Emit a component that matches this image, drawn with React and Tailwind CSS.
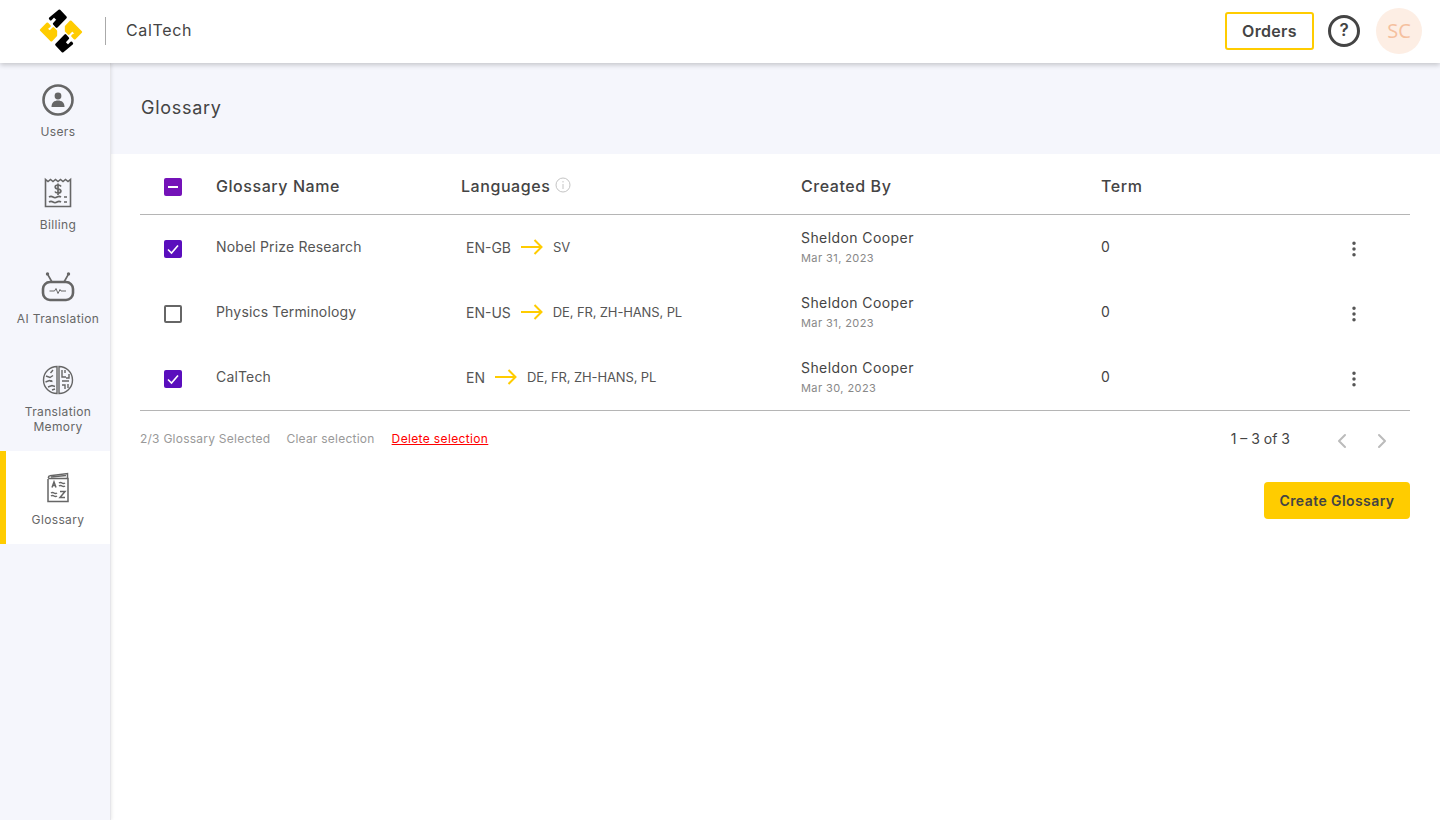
import { EllipsisVertical, ChevronLeft, ChevronRight } from 'lucide-react';

const rows = [
  { name: 'Nobel Prize Research', from: 'EN-GB', to: 'SV', date: 'Mar 31, 2023', checked: true },
  { name: 'Physics Terminology', from: 'EN-US', to: 'DE, FR, ZH-HANS, PL', date: 'Mar 31, 2023', checked: false },
  { name: 'CalTech', from: 'EN', to: 'DE, FR, ZH-HANS, PL', date: 'Mar 30, 2023', checked: true },
];

function Logo() {
  return (
    <svg width="50" height="50" viewBox="0 0 150 150" className="shrink-0" strokeWidth="7" strokeLinejoin="round">
      <path d="M70 14 89 34 62 62 54 53 65 41 54 30 44 40 42 37Z" fill="#000" stroke="#000" />
      <path d="M80 136 61 116 88 88 96 97 85 109 96 120 106 110 108 113Z" fill="#000" stroke="#000" />
      <path d="M15 72 34 53 41 60 31 68 41 78 52 67 60 75 60 88 46 103Z" fill="#ffcc00" stroke="#ffcc00" />
      <path d="M135 78 116 97 109 90 119 82 109 72 98 83 90 75 90 62 104 47Z" fill="#ffcc00" stroke="#ffcc00" />
    </svg>
  );
}

function UsersIcon() {
  return (
    <svg width="34" height="34" viewBox="0 0 34 34" fill="none">
      <circle cx="17" cy="17" r="14.5" stroke="#666" strokeWidth="2.6" />
      <circle cx="17" cy="13" r="3.4" fill="#666" />
      <path d="M10.5 24c0-4.5 2.8-6.5 6.5-6.5s6.5 2 6.5 6.5Z" fill="#666" />
    </svg>
  );
}

function BillingIcon() {
  return (
    <svg width="30" height="32" viewBox="0 0 30 32" fill="none" stroke="#666" strokeWidth="1.6">
      <path d="M2.500 2.500v27h25v-27l-2.500 2-2.500-2-2.500 2-2.500-2-2.500 2-2.500-2-2.500 2-2.500-2-2.500 2Z" />
      <path d="M6 20c1.500-1 2.500-1 4 0s2.500 1 4 0 2.500-1 4 0M6 25c1.500-1 2.500-1 4 0s2.500 1 4 0 2.500-1 4 0M21 20h3M21 25h3" />
      <path d="M18 9.500c-.5-1-1.500-1.500-3-1.500-1.700 0-2.800.8-2.800 2s1 1.800 2.800 2 2.900.8 2.900 2-1.200 2-2.900 2c-1.500 0-2.600-.5-3-1.500M15 6.500v11.500" strokeWidth="1.700" />
    </svg>
  );
}

function RobotIcon() {
  return (
    <svg width="34" height="32" viewBox="0 0 34 32" fill="none" stroke="#666">
      <rect x="2" y="11" width="30" height="18" rx="7" strokeWidth="2.600" />
      <path d="M11 11 7 4M23 11l4-7" strokeWidth="1.600" />
      <circle cx="6.500" cy="3" r="1.700" fill="#666" stroke="none" />
      <circle cx="27.500" cy="3" r="1.700" fill="#666" stroke="none" />
      <path d="M8.500 20h5l1.500-2.500 2 5 2-4 1 1.500h5" strokeWidth="1" />
    </svg>
  );
}

function BrainIcon() {
  return (
    <svg width="32" height="32" viewBox="0 0 32 32" fill="none" stroke="#666" strokeWidth="1.400">
      <path d="M15 2.500C8 2.500 1.500 8 1.500 16S8 29.500 15 29.500Z" />
      <path d="M17 2.500C24 2.500 30.500 8 30.500 16S24 29.500 17 29.500Z" />
      <path d="M11 6 8.500 9M4 12l4 1.500 3-2M3.500 18l4-1.500 3 1M6 23l4-1.500 3 1M10 26l3-1" />
      <path d="M20 6v7h4M27 10v4h-3M20 17h7M20 21h3v4M26 20v4M23 9V6" />
      <circle cx="9" cy="17" r="1" fill="#666" stroke="none" />
    </svg>
  );
}

function BookIcon() {
  return (
    <svg width="26" height="32" viewBox="0 0 26 32" fill="none" stroke="#666" strokeWidth="1.500">
      <path d="M3 7v22.500h20V6.500H4.500C3 6.500 3 4 5 3.800L22.500 1.500v5" />
      <path d="M6 5 21 3.500" />
      <path d="M7 15.500 9 10l2 5.500M7.800 13.500h2.400" />
      <path d="M14 11c1-.8 2-.8 3 0s2 .8 3 0M14 14c1-.8 2-.8 3 0s2 .8 3 0" />
      <path d="M6 21c1-.8 2-.8 3 0s2 .8 3 0M6 24c1-.8 2-.8 3 0s2 .8 3 0" />
      <path d="M15 19.500h5l-5 6h5" />
    </svg>
  );
}

const navItems = [
  { label: ['Users'], icon: UsersIcon, h: 'h-[93px] pt-[20px]' },
  { label: ['Billing'], icon: BillingIcon, h: 'h-[93px] pt-[20px]' },
  { label: ['AI Translation'], icon: RobotIcon, h: 'h-[93px] pt-[21px]' },
  { label: ['Translation', 'Memory'], icon: BrainIcon, h: 'h-[109px] pt-[21px]' },
  { label: ['Glossary'], icon: BookIcon, h: 'h-[93px] pt-[20px]', active: true },
];

function Checkbox({ state }) {
  if (state === 'mixed') {
    return (
      <div className="w-[18px] h-[18px] rounded-[2px] bg-[#7412b8] flex items-center justify-center">
        <div className="w-[10px] h-[2px] bg-white" />
      </div>
    );
  }
  if (state) {
    return (
      <div className="w-[18px] h-[18px] rounded-[2px] bg-[#5a0ebd] flex items-center justify-center">
        <svg width="14" height="14" viewBox="0 0 14 14" fill="none" stroke="#fff" strokeWidth="1.600">
          <path d="M2 7.500 5.500 11 12 3.500" />
        </svg>
      </div>
    );
  }
  return <div className="w-[18px] h-[18px] rounded-[2px] border-2 border-[#666]" />;
}

function Arrow() {
  return (
    <svg width="22" height="16" viewBox="0 0 22 16" fill="none" stroke="#ffcc00" strokeWidth="2" className="shrink-0 mb-[2px]">
      <path d="M0 8h20.500M13.500 1l7 7-7 7" />
    </svg>
  );
}

export default function App() {
  return (
    <div className="h-screen flex flex-col bg-white font-['Inter',sans-serif] text-[#444] overflow-hidden">
      {/* Header */}
      <header className="relative z-20 h-[63px] shrink-0 bg-white shadow-[0_2px_5px_rgba(0,0,0,0.2)] flex items-center pl-[36px] pr-[18px] pb-[2px]">
        <Logo />
        <div className="w-px h-[28px] bg-[#aaa] ml-[19px]" />
        <span className="ml-[20px] pb-[1px] text-[16px] tracking-[0.04em] text-[#444]">CalTech</span>
        <div className="flex-1" />
        <button className="w-[89px] h-[38px] border-2 border-[#ffcc00] rounded-[3px] text-[16px] font-semibold tracking-[0.02em] text-[#444]">Orders</button>
        <div className="ml-[14px] w-[32px] h-[32px] rounded-full border-[3px] border-[#444] flex items-center justify-center text-[17px] font-semibold text-[#444]">?</div>
        <div className="ml-[16px] w-[46px] h-[46px] rounded-full bg-[#fdeee4] flex items-center justify-center text-[20px] text-[#f5c09e] font-['Open_Sans',sans-serif]">SC</div>
      </header>

      <div className="flex-1 flex min-h-0">
        {/* Sidebar */}
        <aside className="relative z-10 w-[111px] shrink-0 bg-[#f5f6fc] border-r border-[#e6e6ea] shadow-[1px_0_3px_rgba(0,0,0,0.08)] flex flex-col">
          {navItems.map((item) => {
            const Icon = item.icon;
            return (
              <div key={item.label[0]} className={`${item.h} flex flex-col items-center border-l-[6px] ${item.active ? 'bg-white border-[#ffcc00]' : 'border-transparent'}`}>
                <div className="h-[34px] flex items-center justify-center"><Icon /></div>
                <div className="mt-[7px] text-center text-[12px] leading-[15px] tracking-[0.03em] text-[#666]">
                  {item.label.map((l) => <div key={l}>{l}</div>)}
                </div>
              </div>
            );
          })}
        </aside>

        {/* Main */}
        <main className="flex-1 min-w-0">
          <div className="h-[91px] bg-[#f5f6fc] flex items-center pl-[30px] pb-[2px] text-[18px] tracking-[0.04em] text-[#444]">Glossary</div>
          <div className="pl-[29px] pr-[30px]">
            <div className="grid grid-cols-[76px_245px_340px_300px_1fr] items-center h-[61px] border-b border-[#b5b5b5] text-[16px] tracking-[0.035em] font-medium text-[#444]">
              <div className="pl-[24px] pt-[6px]"><Checkbox state="mixed" /></div>
              <div className="pt-[4px]">Glossary Name</div>
              <div className="flex items-start gap-[5px] pt-[4px]">
                Languages
                <svg width="16" height="16" viewBox="0 0 16 16" fill="none" stroke="#c4c4c4" className="mt-[3px]">
                  <circle cx="8" cy="8" r="7" />
                  <path d="M8 7v5M8 4v1.500" />
                </svg>
              </div>
              <div className="pt-[4px]">Created By</div>
              <div className="pt-[4px]">Term</div>
            </div>

            {rows.map((row) => (
              <div key={row.name} className="grid grid-cols-[76px_245px_340px_300px_1fr] items-center h-[65px] text-[14px] tracking-[0.03em] text-[#444]">
                <div className="pl-[24px] pt-[2px]"><Checkbox state={row.checked} /></div>
                <div className="pb-[2px] tracking-[0.012em] text-[#555]">{row.name}</div>
                <div className="flex items-center pl-[5px] text-[#555] tracking-normal">
                  <span className="mr-[10px]">{row.from}</span>
                  <Arrow />
                  <span className="ml-[10px] pt-[1px] text-[13px] tracking-[-0.01em]">{row.to}</span>
                </div>
                <div className="pb-[2px]">
                  <div>Sheldon Cooper</div>
                  <div className="text-[11px] leading-[16px] mt-[2px] text-[#888]">{row.date}</div>
                </div>
                <div className="flex items-center justify-between pr-[46px]">
                  <span className="pb-[2px]">0</span>
                  <EllipsisVertical size={20} color="#555" strokeWidth={2.200} className="mt-[3px]" />
                </div>
              </div>
            ))}

            <div className="border-t border-[#b5b5b5] h-[58px] flex items-center justify-between">
              <div className="flex items-center gap-[16px] text-[12px] tracking-[0.02em] text-[#999] -mt-[1px]">
                <span>2/3 Glossary Selected</span>
                <span>Clear selection</span>
                <span className="text-[#f00] underline ml-[1px] tracking-[0.03em]">Delete selection</span>
              </div>
              <div className="flex items-center text-[14px] text-[#444]">
                <span className="tracking-normal -mt-[3px]">1 – 3 of 3</span>
                <ChevronLeft size={24} color="#bbb" strokeWidth={2} className="ml-[40px] mt-[3px]" />
                <ChevronRight size={24} color="#bbb" strokeWidth={2} className="ml-[16px] mr-[16px] mt-[3px]" />
              </div>
            </div>

            <div className="flex justify-end mt-[14px]">
              <button className="w-[146px] h-[37px] rounded-[4px] bg-[#ffcc00] text-[14px] font-semibold tracking-[0.03em] text-[#444]">Create Glossary</button>
            </div>
          </div>
        </main>
      </div>
    </div>
  );
}
